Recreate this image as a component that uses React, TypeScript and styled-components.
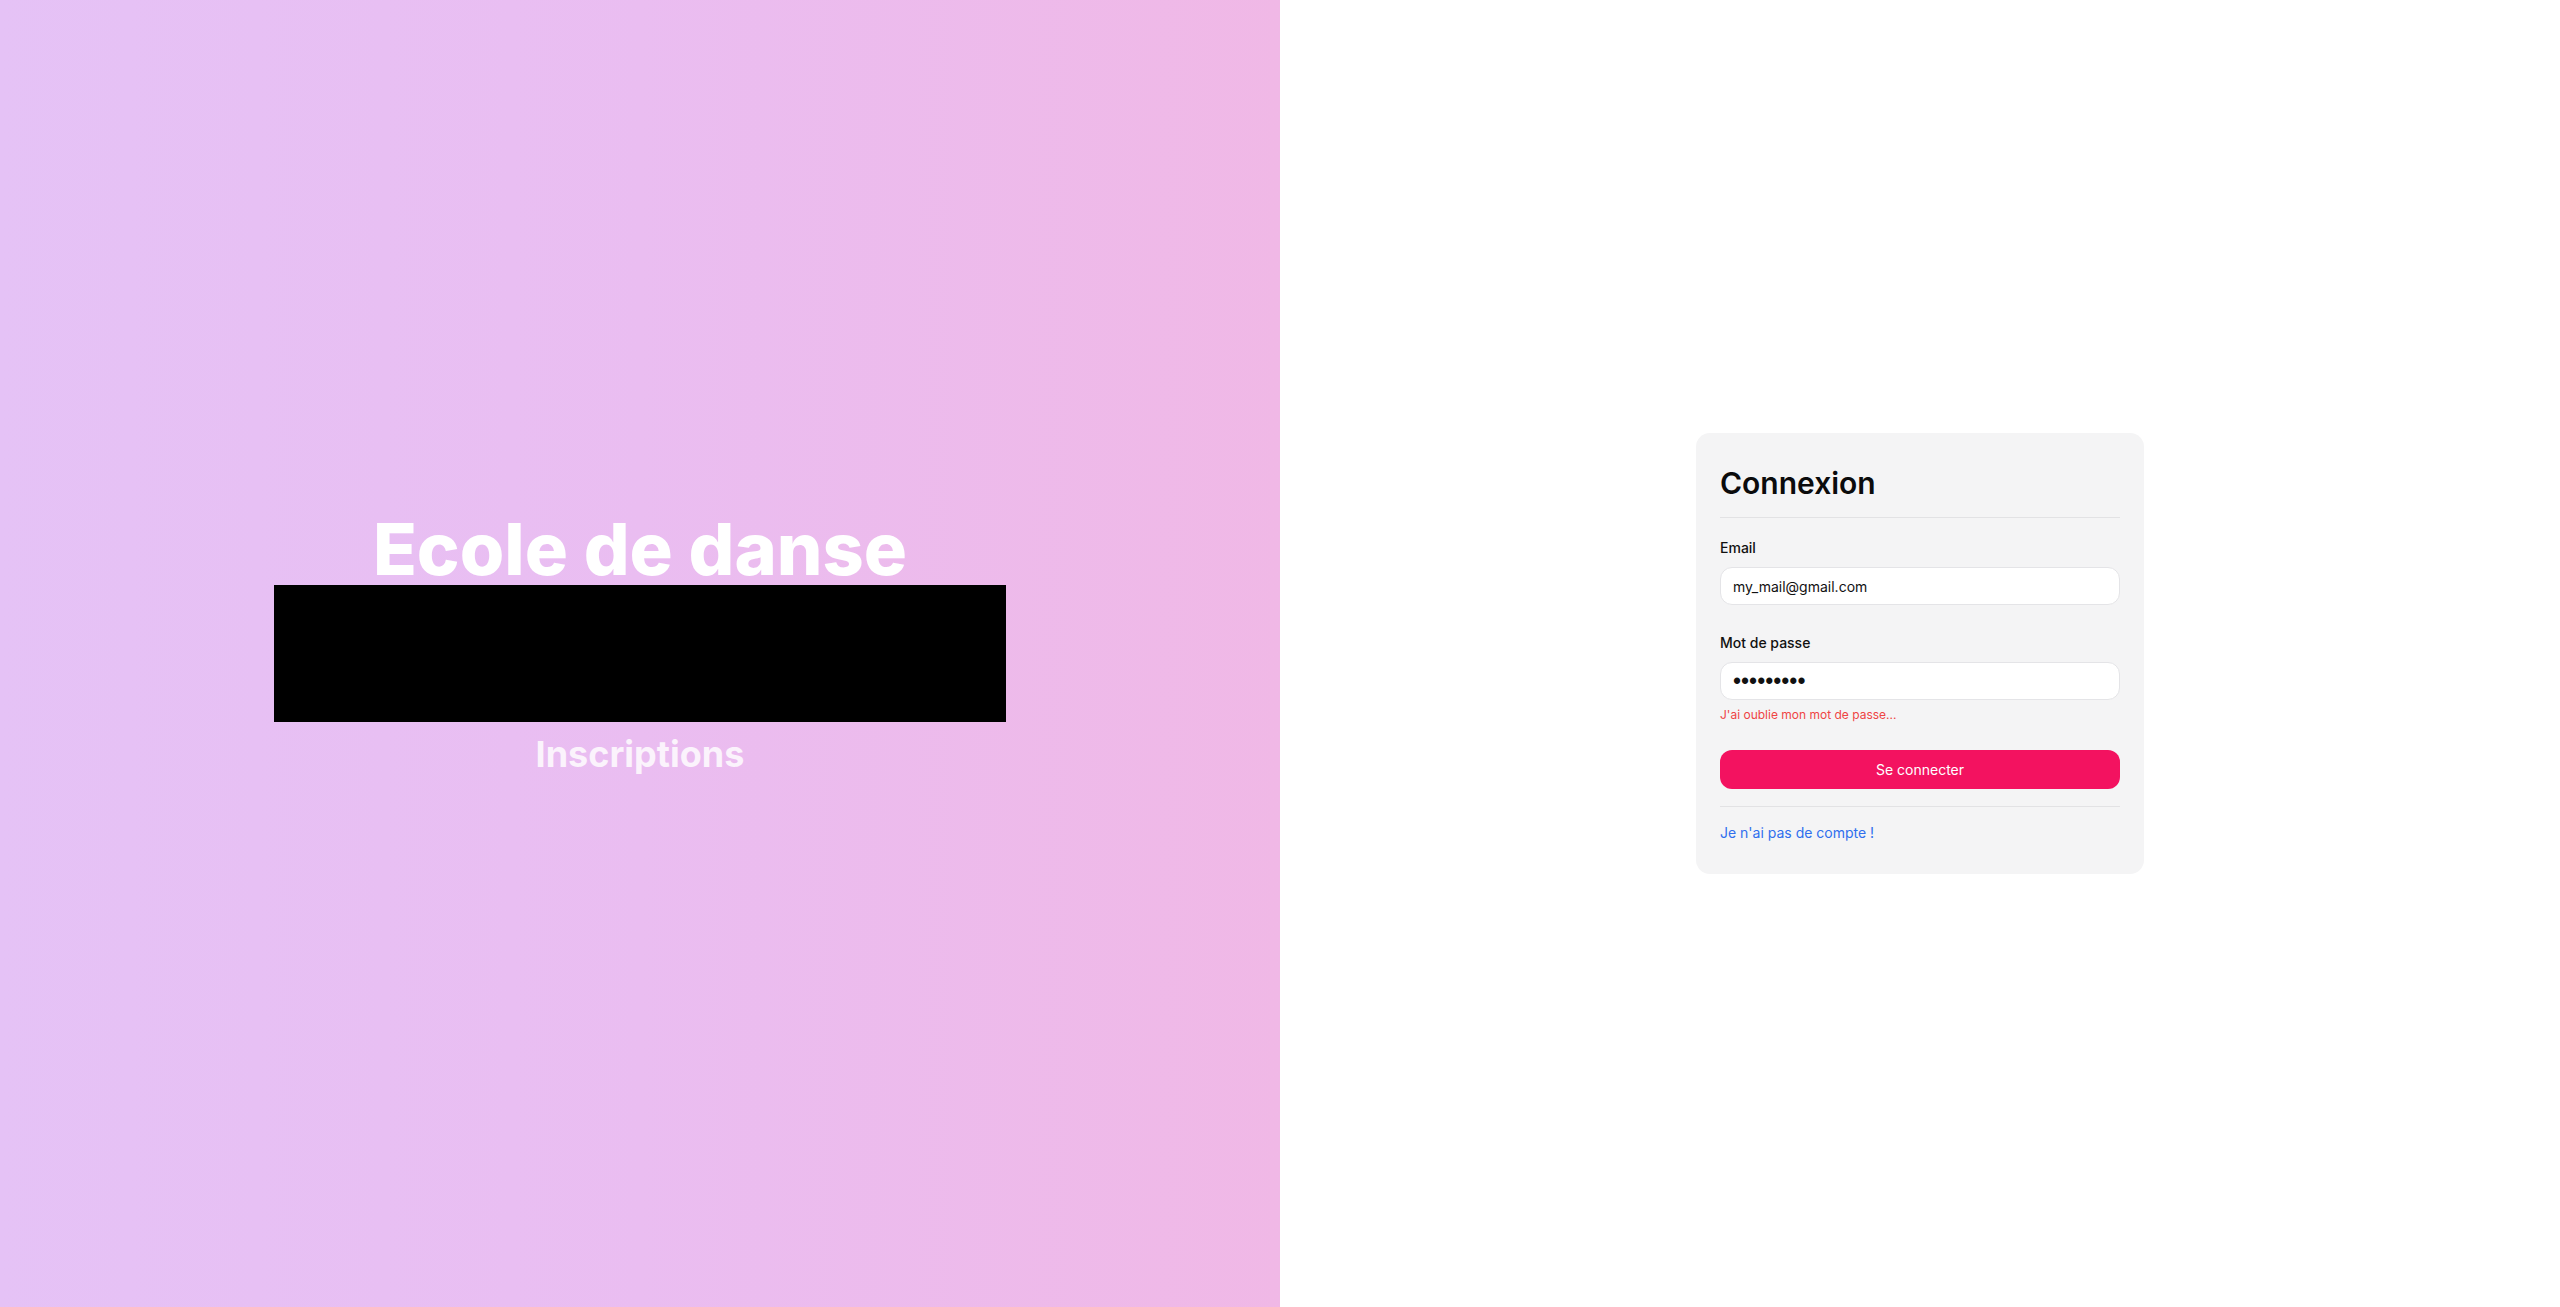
import React from "react"
import styled, { createGlobalStyle } from "styled-components"

const GlobalStyle = createGlobalStyle`
  html, body, #root {
    margin: 0;
    padding: 0;
    height: 100%;
  }
  body {
    font-family: Inter, "Noto Sans", sans-serif;
    color: #11181c;
  }
  * {
    box-sizing: border-box;
  }
`

const SPage = styled.div`
  display: grid;
  grid-template-columns: 1fr 1fr;
  width: 100%;
  height: 100vh;
`

const SHero = styled.section`
  display: flex;
  flex-direction: column;
  align-items: center;
  justify-content: center;
  padding-bottom: 23px;
  background: linear-gradient(90deg, #e5c2f6 0%, #eabdf1 50%, #f0b8e6 100%);
`

const STitle = styled.h1`
  margin: 0;
  font-size: 72px;
  line-height: 1;
  font-weight: 800;
  color: #ffffff;
`

const SCover = styled.div`
  width: 732px;
  height: 137px;
  background-color: #000000;
`

const SSubtitle = styled.h2`
  margin: 14px 0 0;
  font-size: 36px;
  line-height: 1;
  font-weight: 700;
  color: #fbf3fc;
`

const SSide = styled.section`
  display: flex;
  align-items: center;
  justify-content: center;
  background-color: #ffffff;
`

const SCard = styled.form`
  display: flex;
  flex-direction: column;
  width: 448px;
  padding: 30px 24px 31px;
  background-color: #f4f4f5;
  border-radius: 14px;
`

const SHeading = styled.h3`
  margin: 0;
  padding-bottom: 14px;
  border-bottom: 1px solid #e2e2e4;
  font-size: 30px;
  line-height: 40px;
  font-weight: 600;
  color: #0b0b0c;
`

const SField = styled.label<{ $top: number }>`
  display: flex;
  flex-direction: column;
  gap: 9px;
  margin-top: ${({ $top }) => $top}px;
`

const SLabel = styled.span`
  font-size: 14px;
  line-height: 20px;
  font-weight: 500;
  color: #111111;
`

const SInput = styled.input`
  height: 38px;
  width: 100%;
  padding: 0 12px;
  border: 1px solid #e4e4e7;
  border-radius: 12px;
  background-color: #ffffff;
  font-family: Inter, "Noto Sans", sans-serif;
  font-size: 14px;
  color: #111111;
  outline: none;

  &[type="password"] {
    font-family: "Liberation Sans", Arial, sans-serif;
    font-size: 23px;
    letter-spacing: 0;
  }
`

const SForgot = styled.a`
  margin-top: 7px;
  font-size: 12px;
  line-height: 16px;
  color: #ef4444;
  text-decoration: none;
`

const SSubmit = styled.button`
  height: 39px;
  margin-top: 27px;
  border: none;
  border-radius: 12px;
  background-color: #f31260;
  color: #ffffff;
  font-family: Inter, "Noto Sans", sans-serif;
  font-size: 14px;
  cursor: pointer;
`

const SDivider = styled.hr`
  margin: 17px 0 16px;
  border: none;
  border-top: 1px solid #e2e2e4;
`

const SSignup = styled.a`
  font-size: 14px;
  line-height: 20px;
  color: #2f6fee;
  text-decoration: none;
`

const App = () => {
  return (
    <>
      <GlobalStyle />
      <SPage>
        <SHero>
          <STitle>Ecole de danse</STitle>
          <SCover />
          <SSubtitle>Inscriptions</SSubtitle>
        </SHero>
        <SSide>
          <SCard onSubmit={(e) => e.preventDefault()}>
            <SHeading>Connexion</SHeading>
            <SField $top={20}>
              <SLabel>Email</SLabel>
              <SInput type="email" defaultValue="my_mail@gmail.com" />
            </SField>
            <SField $top={28}>
              <SLabel>Mot de passe</SLabel>
              <SInput type="password" defaultValue="123456789" />
            </SField>
            <SForgot href="#">J'ai oublie mon mot de passe...</SForgot>
            <SSubmit type="submit">Se connecter</SSubmit>
            <SDivider />
            <SSignup href="#">Je n'ai pas de compte !</SSignup>
          </SCard>
        </SSide>
      </SPage>
    </>
  )
}

export default App
